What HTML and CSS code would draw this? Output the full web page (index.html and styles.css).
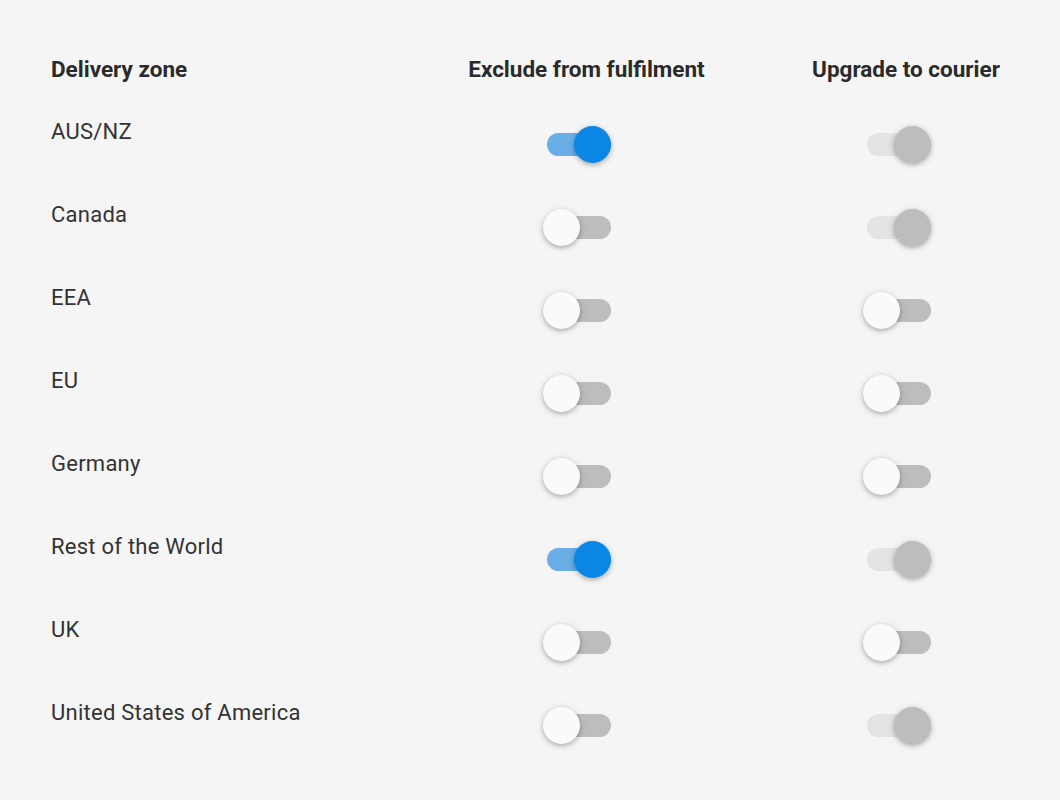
FILE: index.html
```html
<!DOCTYPE html>
<html lang="en">
<head>
    <meta charset="UTF-8">
    <meta name="viewport" content="width=device-width, initial-scale=1.0">
    <title>Delivery zones</title>
    <link rel="stylesheet" href="styles.css">
</head>
<body>
    <div class="zones">
        <div class="head">Delivery zone</div>
        <div class="head center">Exclude from fulfilment</div>
        <div class="head center">Upgrade to courier</div>

        <div class="zone">AUS/NZ</div>
        <div class="cell"><span class="switch on"></span></div>
        <div class="cell"><span class="switch on disabled"></span></div>

        <div class="zone">Canada</div>
        <div class="cell"><span class="switch"></span></div>
        <div class="cell"><span class="switch on disabled"></span></div>

        <div class="zone">EEA</div>
        <div class="cell"><span class="switch"></span></div>
        <div class="cell"><span class="switch"></span></div>

        <div class="zone">EU</div>
        <div class="cell"><span class="switch"></span></div>
        <div class="cell"><span class="switch"></span></div>

        <div class="zone">Germany</div>
        <div class="cell"><span class="switch"></span></div>
        <div class="cell"><span class="switch"></span></div>

        <div class="zone">Rest of the World</div>
        <div class="cell"><span class="switch on"></span></div>
        <div class="cell"><span class="switch on disabled"></span></div>

        <div class="zone">UK</div>
        <div class="cell"><span class="switch"></span></div>
        <div class="cell"><span class="switch"></span></div>

        <div class="zone">United States of America</div>
        <div class="cell"><span class="switch"></span></div>
        <div class="cell"><span class="switch on disabled"></span></div>
    </div>
</body>
</html>
```

FILE: styles.css
```css
/* Page */
body {
    margin: 0;
    background-color: #f5f5f5;
    font-family: Roboto, "Liberation Sans", sans-serif;
    color: #333;
}

/* Table of zones */
.zones {
    display: grid;
    grid-template-columns: 1fr 237px 188px;
    grid-template-rows: 64px repeat(8, 83px);
    column-gap: 107px;
    width: 949px;
    padding: 56px 0 0 51px;
    font-size: 22px;
    line-height: 26px;
}

/* Header row */
.head {
    font-weight: 700;
    font-size: 22.5px;
    color: #2a2a2a;
    white-space: nowrap;
}

.center {
    text-align: center;
}

.zone {
    margin-top: -1px;
    letter-spacing: 0.25px;
}

/* Switch cell */
.cell {
    display: flex;
    justify-content: center;
    align-items: flex-start;
    padding-right: 19px;
}

.switch {
    position: relative;
    display: block;
    width: 68px;
    height: 37px;
    margin-top: 6px;
}

.switch::before {
    content: "";
    position: absolute;
    left: 4px;
    top: 7px;
    width: 64px;
    height: 23px;
    border-radius: 12px;
    background-color: #bdbdbd;
}

.switch::after {
    content: "";
    position: absolute;
    left: 0;
    top: 0;
    width: 37px;
    height: 37px;
    border-radius: 50%;
    background-color: #fafafa;
    box-shadow: 0 2px 4px rgba(0, 0, 0, 0.22), 0 1px 8px rgba(0, 0, 0, 0.12);
}

/* On state */
.switch.on::before {
    background-color: #6aaee8;
}

.switch.on::after {
    left: 31px;
    background-color: #0a86e4;
}

/* Disabled state */
.switch.disabled::before {
    background-color: #e4e4e4;
}

.switch.disabled::after {
    background-color: #bdbdbd;
}
```
